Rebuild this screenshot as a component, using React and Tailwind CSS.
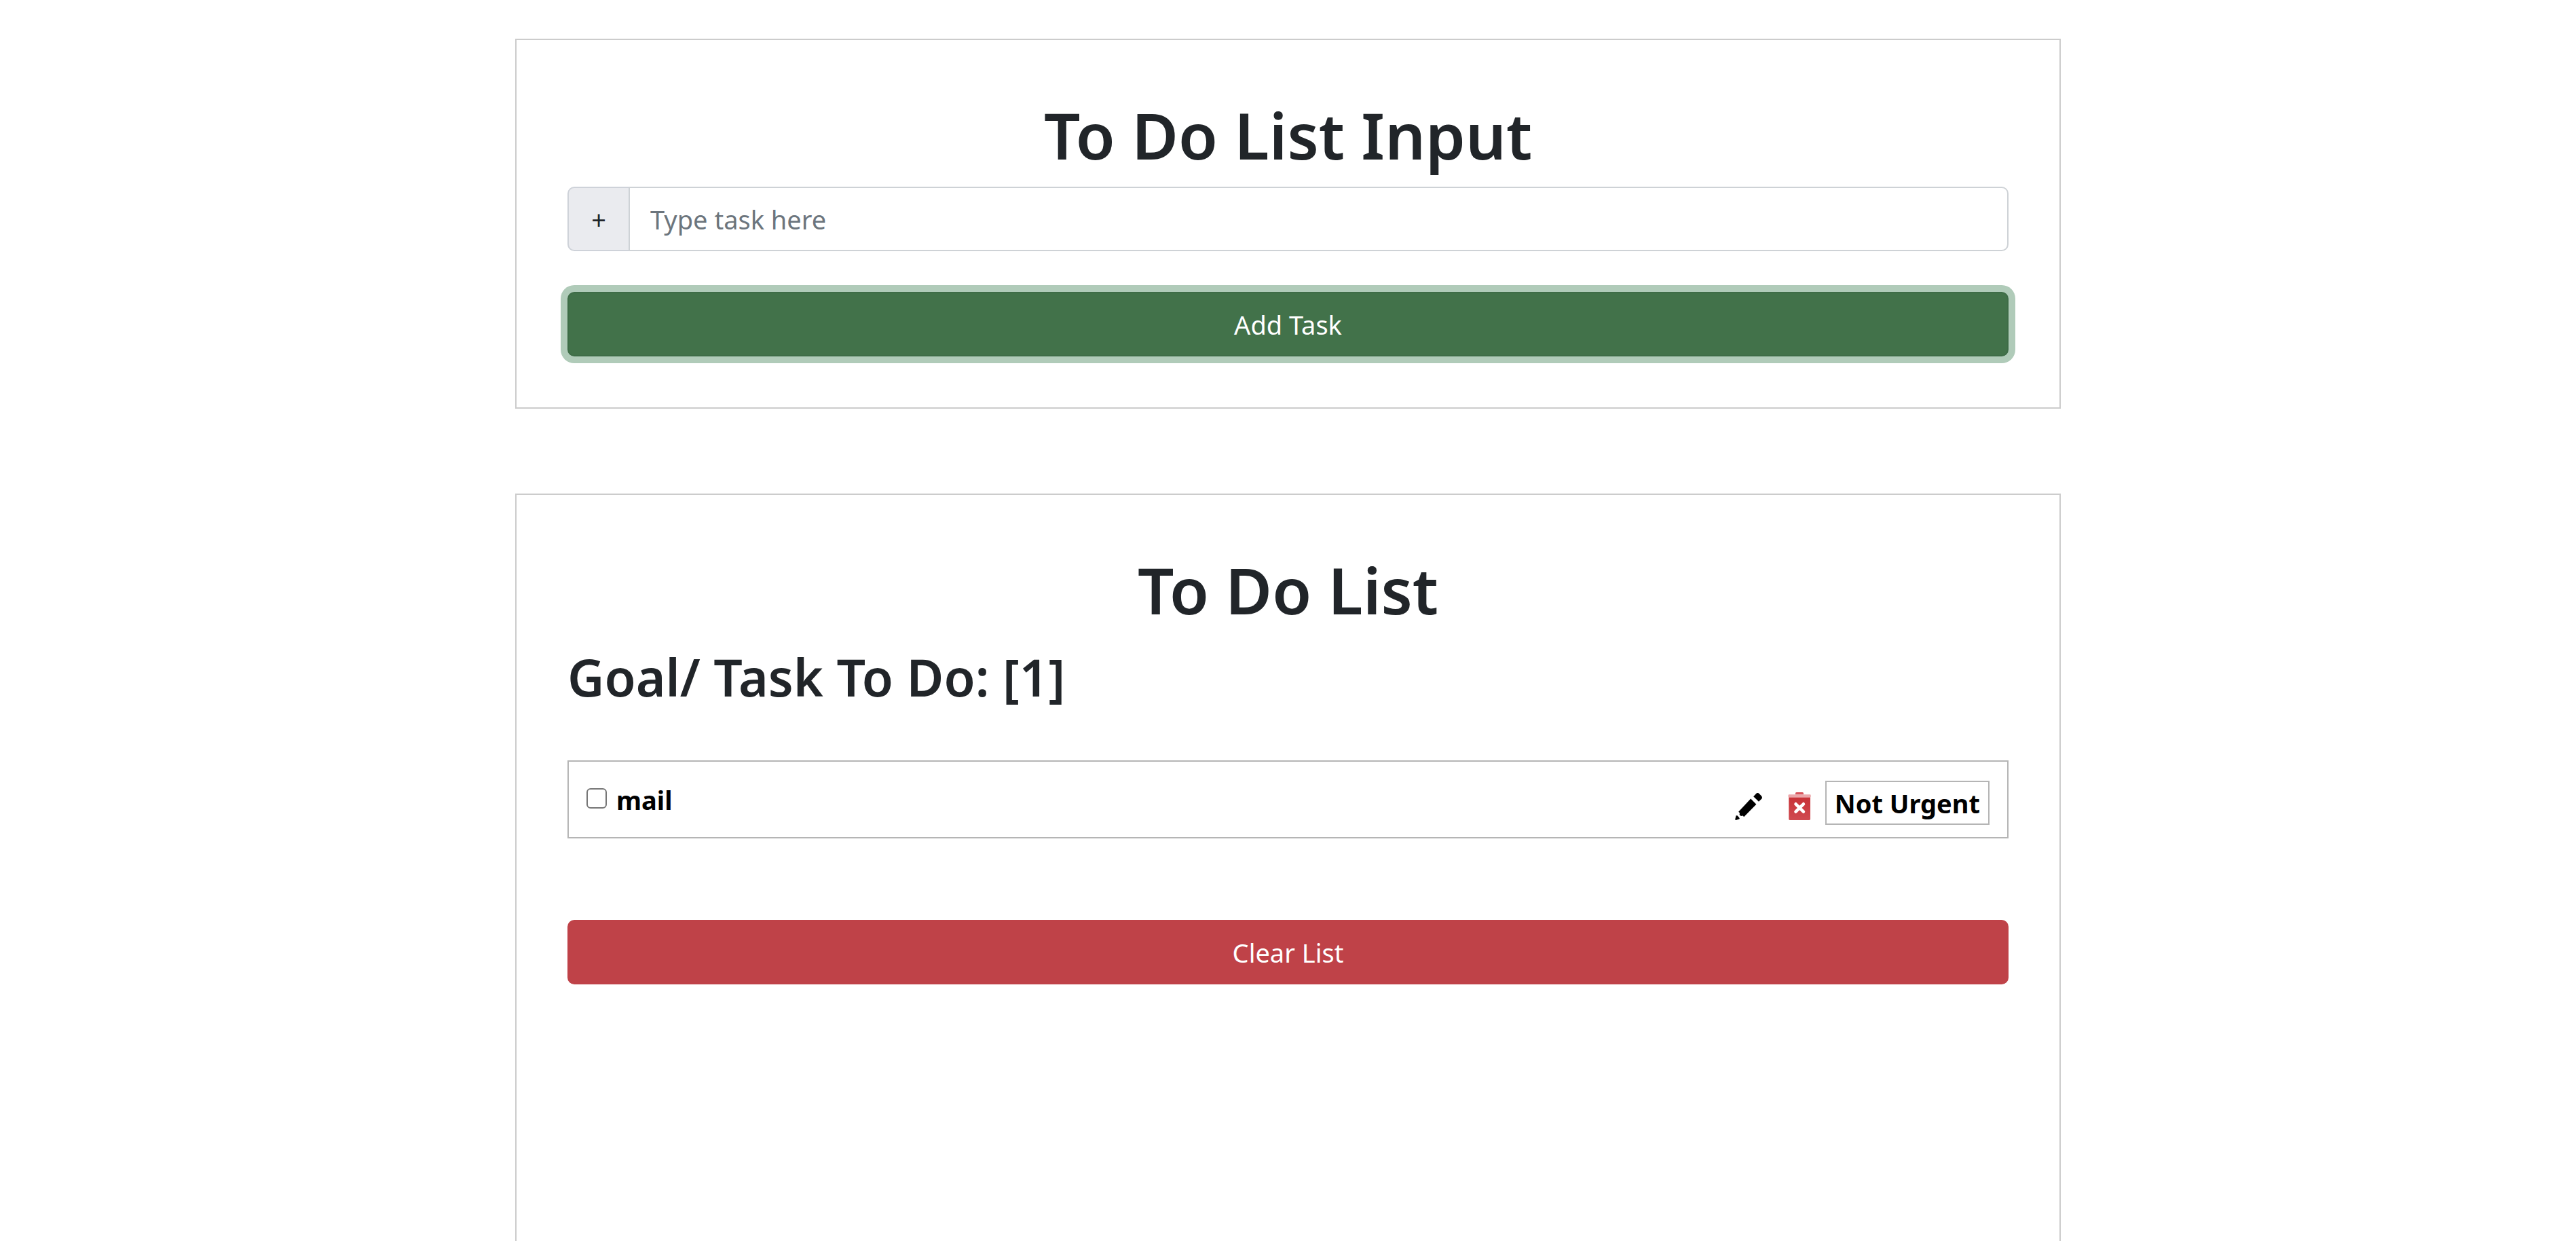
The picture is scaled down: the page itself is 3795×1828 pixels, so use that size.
import { useState } from "react";

function PencilIcon() {
  return (
    <svg viewBox="0 0 40 40" className="size-10" aria-hidden="true">
      <path d="M27.2 5.3 L31.2 1 Q33.2 -1 35.6 0.9 L39 4.6 Q40.8 6.8 39.2 8.8 L35 12.8 Z" />
      <path d="M23.2 8.5 L31.4 16.7 L13.2 35.2 L11.6 33.6 L8.8 34 L6.6 32.2 L7 29.4 L5.2 27.8 Z" />
      <path d="M1.6 33.2 L3.8 33.6 L6.8 37.2 L6.4 38.6 L1.4 40 Q0.2 40 0.3 38.8 Z" />
    </svg>
  );
}

function TrashIcon() {
  return (
    <svg viewBox="0 0 40 40" className="size-10 overflow-visible" aria-hidden="true">
      <defs>
        <linearGradient id="bin" x1="0" y1="0" x2="0" y2="1">
          <stop offset="0" stopColor="#c83237" />
          <stop offset="1" stopColor="#d04a50" />
        </linearGradient>
      </defs>
      <path d="M14 2.5 V0.6 Q14 -1 15.6 -1 H24.4 Q26 -1 26 0.6 V2.5 Z" fill="#d8555c" />
      <path d="M4.3 6 H36 V38.6 Q36 40 34.6 40 H5.7 Q4.3 40 4.3 38.6 Z" fill="url(#bin)" />
      <rect x="3.5" y="2.2" width="33.2" height="4.6" rx="1.4" fill="#eba7aa" />
      <path d="M14.5 16.3 L25.9 27.7 M25.9 16.3 L14.5 27.7" stroke="#fff" strokeWidth="4.6" strokeLinecap="round" />
    </svg>
  );
}

function Panel({ title, className = "", children }) {
  return (
    <section className={`flex w-3/5 shrink-0 flex-col border-2 border-[#cccccc] p-[75px] ${className}`}>
      <h1 className="mb-[11px] text-center text-[94px] leading-[130px] font-semibold">{title}</h1>
      {children}
    </section>
  );
}

function TaskRow({ name }) {
  const [done, setDone] = useState(false);
  return (
    <li className="flex items-start justify-between border-2 border-[#b5b5b5] px-[26px] pt-[28px] pb-[18px] font-bold text-black">
      <label className="flex items-start gap-[14px] leading-[56px]">
        <input
          type="checkbox"
          checked={done}
          onChange={() => setDone(!done)}
          className="mt-[11px] size-[30px] appearance-none rounded-[6px] border-2 border-[#767676] bg-white checked:bg-[#0075ff]"
        />
        {name}
      </label>
      <div className="flex items-center">
        <button type="button" aria-label="Edit task" className="mt-[10px] mr-[35px]">
          <PencilIcon />
        </button>
        <button type="button" aria-label="Delete task" className="mt-[10px] mr-[18px]">
          <TrashIcon />
        </button>
        <button type="button" className="h-[65px] border-2 border-[#b5b5b5] px-3">
          Not Urgent
        </button>
      </div>
    </li>
  );
}

export default function App() {
  const tasks = ["mail"];
  return (
    <main className="flex h-screen flex-col items-center gap-[125px] overflow-hidden bg-white pt-[57px] font-['Noto_Sans',sans-serif] text-[38px] leading-[60px] text-[#212529]">
      <Panel title="To Do List Input">
        <div className="mb-[60px] flex h-[95px]">
          <label
            htmlFor="task"
            className="flex w-[90px] items-center justify-center rounded-l-[10px] border-2 border-r-0 border-[#ced2d9] bg-[#eaebef]"
          >
            +
          </label>
          <input
            id="task"
            type="text"
            placeholder="Type task here"
            className="min-w-0 flex-1 rounded-r-[10px] border-2 border-[#ced2d6] bg-white px-[30px] placeholder:text-[#6c757d]"
          />
        </div>
        <button
          type="button"
          className="h-[95px] rounded-[10px] border-2 border-[#3e6c47] bg-[#42724a] text-white ring-10 ring-[#b0cbb9]"
        >
          Add Task
        </button>
      </Panel>
      <Panel title="To Do List" className="min-h-screen">
        <h2 className="mb-[71px] text-[75px] leading-[104px] font-semibold">Goal/ Task To Do: [{tasks.length}]</h2>
        <ul className="mb-[120px]">
          {tasks.map((name) => (
            <TaskRow key={name} name={name} />
          ))}
        </ul>
        <button type="button" className="h-[95px] rounded-[10px] bg-[#bf4248] text-white">
          Clear List
        </button>
      </Panel>
    </main>
  );
}
